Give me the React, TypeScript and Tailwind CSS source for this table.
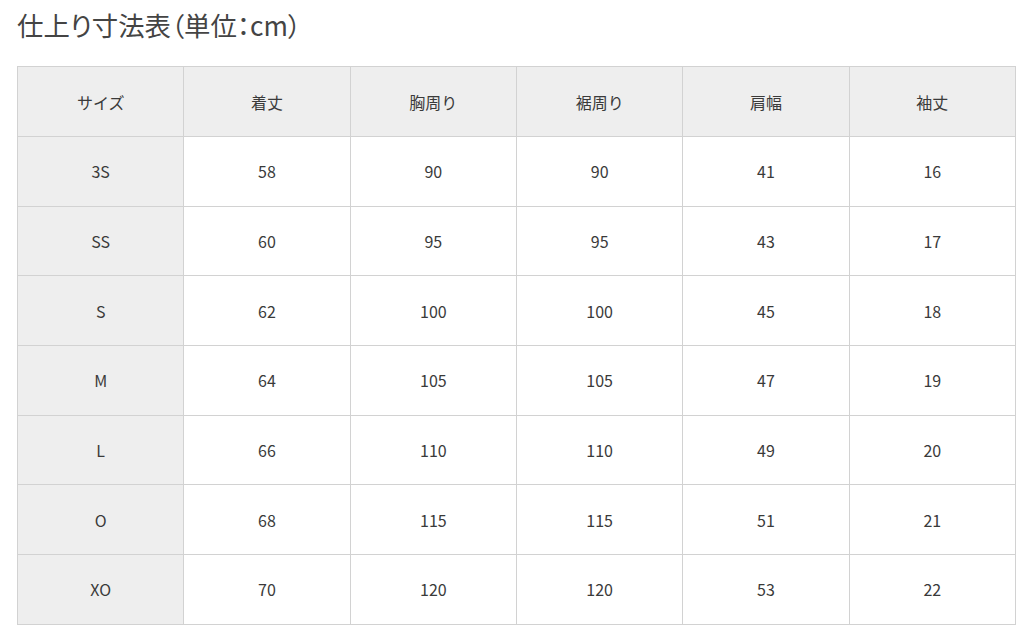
import React from "react";

const headers = ["サイズ", "着丈", "胸周り", "裾周り", "肩幅", "袖丈"];
const rows: string[][] = [
  ["3S", "58", "90", "90", "41", "16"],
  ["SS", "60", "95", "95", "43", "17"],
  ["S", "62", "100", "100", "45", "18"],
  ["M", "64", "105", "105", "47", "19"],
  ["L", "66", "110", "110", "49", "20"],
  ["O", "68", "115", "115", "51", "21"],
  ["XO", "70", "120", "120", "53", "22"],
];

export default function App() {
  return (
    <div
      className="min-h-screen bg-white pl-[17px] pt-[5px] text-[#3a3a3a]"
      style={{ fontFamily: '"Noto Sans CJK JP", "Noto Sans", sans-serif' }}
    >
      <h1 className="m-0 text-[26.4px] leading-[40px] font-normal text-[#444444] [font-feature-settings:'palt']">
        仕上り寸法表（単位：cm）
      </h1>
      <table className="mt-[21px] w-[999px] table-fixed border-collapse text-[16px]">
        <thead>
          <tr className="h-[70px]">
            {headers.map((h) => (
              <th
                key={h}
                className="border border-[#d2d2d2] bg-[#eeeeee] p-0 text-center font-normal"
              >
                {h}
              </th>
            ))}
          </tr>
        </thead>
        <tbody>
          {rows.map((r) => (
            <tr key={r[0]} className="h-[69.7px]">
              {r.map((c, i) => (
                <td
                  key={i}
                  className={
                    "border border-[#d2d2d2] p-0 text-center " +
                    (i === 0 ? "bg-[#eeeeee]" : "bg-white")
                  }
                >
                  {c}
                </td>
              ))}
            </tr>
          ))}
        </tbody>
      </table>
    </div>
  );
}
